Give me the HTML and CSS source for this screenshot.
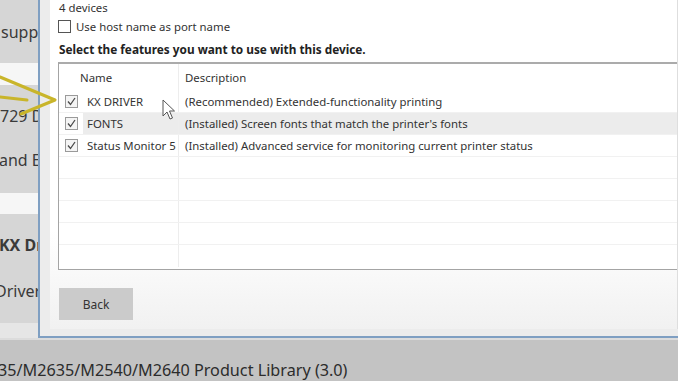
FILE: index.html
```html
<!DOCTYPE html>
<html>
<head>
    <meta charset="utf-8" />
    <title>Product Library - Select features</title>
    <link rel="stylesheet" href="styles.css">
</head>
<body>
    <div class="screen">
        <div class="behind">
            <div class="strip gray tall1"><span class="bgText t1">support</span></div>
            <div class="strip light band"></div>
            <div class="strip gray tall2">
                <span class="bgText t2">729 Driver</span>
                <span class="bgText t3">and Ethernet</span>
            </div>
            <div class="strip light band2"></div>
            <div class="strip gray tall3">
                <span class="bgText bold t4">KX Driver</span>
                <span class="bgText t5">Driver (</span>
            </div>
            <div class="strip pale foot"></div>
        </div>

        <div class="dialog">
            <div class="frame">
                <div class="content">
                    <div class="devices">4 devices</div>
                    <label class="hostRow">
                        <span class="box"></span>
                        <span>Use host name as port name</span>
                    </label>
                    <div class="heading">Select the features you want to use with this device.</div>

                    <div class="list">
                        <div class="row head">
                            <div class="cbCell"></div>
                            <div class="nameCell">Name</div>
                            <div class="descCell">Description</div>
                        </div>
                        <div class="row">
                            <div class="cbCell"><svg class="check" width="13" height="13" viewBox="0 0 13 13"><rect x="0.5" y="0.5" width="12" height="12" fill="#f4f4f4" stroke="#9a9a9a"/><path d="M3 6.5 L5.5 9.5 L10 3" fill="none" stroke="#4a4a4a" stroke-width="1.3"/></svg></div>
                            <div class="nameCell">KX DRIVER</div>
                            <div class="descCell">(Recommended) Extended-functionality printing</div>
                        </div>
                        <div class="row selected">
                            <div class="cbCell"><svg class="check" width="13" height="13" viewBox="0 0 13 13"><rect x="0.5" y="0.5" width="12" height="12" fill="#f4f4f4" stroke="#9a9a9a"/><path d="M3 6.5 L5.5 9.5 L10 3" fill="none" stroke="#4a4a4a" stroke-width="1.3"/></svg></div>
                            <div class="nameCell">FONTS</div>
                            <div class="descCell">(Installed) Screen fonts that match the printer's fonts</div>
                        </div>
                        <div class="row">
                            <div class="cbCell"><svg class="check" width="13" height="13" viewBox="0 0 13 13"><rect x="0.5" y="0.5" width="12" height="12" fill="#f4f4f4" stroke="#9a9a9a"/><path d="M3 6.5 L5.5 9.5 L10 3" fill="none" stroke="#4a4a4a" stroke-width="1.3"/></svg></div>
                            <div class="nameCell">Status Monitor 5</div>
                            <div class="descCell">(Installed) Advanced service for monitoring current printer status</div>
                        </div>
                        <div class="row empty"><div class="cbCell"></div><div class="nameCell"></div><div class="descCell"></div></div>
                        <div class="row empty"><div class="cbCell"></div><div class="nameCell"></div><div class="descCell"></div></div>
                        <div class="row empty"><div class="cbCell"></div><div class="nameCell"></div><div class="descCell"></div></div>
                        <div class="row empty"><div class="cbCell"></div><div class="nameCell"></div><div class="descCell"></div></div>
                        <div class="row empty last"><div class="cbCell"></div><div class="nameCell"></div><div class="descCell"></div></div>
                    </div>

                    <div class="buttons">
                        <button class="backBtn">Back</button>
                    </div>
                </div>
            </div>
        </div>

        <div class="bottomBar">
            <div class="barEdge"></div>
            <div class="barText">35/M2635/M2540/M2640 Product Library (3.0)</div>
        </div>

        <!-- annotation + mouse pointer drawn over the screen -->
        <svg class="marker" width="70" height="130" viewBox="0 0 70 130">
            <path d="M0 77 L55 100 L21 114" fill="none" stroke="#c9b52a" stroke-width="3" stroke-linejoin="round" stroke-linecap="round"/>
            <path d="M0 97 L27 100" fill="none" stroke="#c9b52a" stroke-width="3" stroke-linecap="round"/>
        </svg>
        <svg class="pointer" width="14" height="22" viewBox="0 0 14 22">
            <path d="M1 1 L1 17 L5 13 L8 20 L10.5 19 L7.5 12 L12.5 12 Z" fill="#fff" stroke="#555" stroke-width="1" stroke-linejoin="round"/>
        </svg>
    </div>
</body>
</html>
```

FILE: styles.css
```css
* {
    box-sizing: border-box;
}

body {
    margin: 0;
    width: 678px;
    height: 381px;
    overflow: hidden;
    background-color: #c3c3c3;
    font-family: "Noto Sans", "Open Sans", sans-serif;
    color: #333;
}

.screen {
    position: relative;
    display: grid;
    grid-template-columns: 38px 1fr;
    grid-template-rows: 338px 43px;
    width: 678px;
    height: 381px;
}

/* window sitting behind the dialog */

.behind {
    display: flex;
    flex-direction: column;
    overflow: hidden;
}

.strip {
    display: flex;
    flex-direction: column;
    overflow: hidden;
    white-space: nowrap;
}

.gray {
    background-color: #d6d6d6;
}

.light {
    background-color: #f6f6f6;
}

.pale {
    background-color: #e6e6e6;
}

.tall1 { height: 63px; }
.band { height: 22px; }
.tall2 { height: 108px; }
.band2 { height: 21px; }
.tall3 { height: 109px; }
.foot { flex: 1; }

.bgText {
    font-size: 16px;
    color: #3a3a3a;
    line-height: 22px;
}

.bgText.bold {
    font-weight: bold;
}

.t1 { margin: 21px 0 0 1px; }
.t2 { margin: 20px 0 0 0; }
.t3 { margin: 22px 0 0 -1px; }
.t4 { margin: 20px 0 0 -1px; }
.t5 { margin: 24px 0 0 -5px; }

/* dialog */

.dialog {
    border-left: 2px solid #7f9fc2;
    border-bottom: 2px solid #7f9fc2;
    background-color: #ececec;
}

.frame {
    height: 100%;
    padding: 0 0 7px 10px;
}

.content {
    height: 100%;
    background: linear-gradient(#ffffff 70%, #f1f1f1);
    border-right: 1px solid #dedede;
    padding-left: 8px;
    font-size: 11.4px;
}

.devices {
    line-height: 16px;
    margin-left: 1px;
}

.hostRow {
    display: flex;
    align-items: center;
    gap: 5px;
    margin-top: 3px;
    height: 14px;
}

.box {
    width: 13px;
    height: 13px;
    border: 1px solid #555;
    background-color: #fff;
}

.heading {
    margin: 7px 0 0 1px;
    line-height: 18px;
    font-size: 11.8px;
    font-weight: bold;
    color: #222;
}

.list {
    margin-top: 4px;
    height: 208px;
    border: 1px solid #a4a4a4;
    border-top: 2px solid #ababab;
    border-right: none;
    background-color: #fff;
}

.row {
    display: grid;
    grid-template-columns: 24px 96px 1fr;
    height: 22px;
    align-items: stretch;
    border-bottom: 1px solid #f1f1f1;
}

.row.head {
    height: 27px;
    border-bottom: none;
}

.row.last {
    border-bottom: none;
}

.cbCell {
    display: flex;
    align-items: center;
    padding-left: 6px;
}

.nameCell {
    display: flex;
    align-items: center;
    padding-left: 4px;
    border-right: 1px solid #ededed;
    white-space: nowrap;
}

.head .nameCell {
    padding-left: 0;
    margin-left: -3px;
}

.descCell {
    display: flex;
    align-items: center;
    padding-left: 6px;
    white-space: nowrap;
}

.selected .nameCell,
.selected .descCell {
    background-color: #ececec;
}

.buttons {
    margin-top: 18px;
}

.backBtn {
    width: 74px;
    height: 32px;
    margin-left: 1px;
    border: none;
    background-color: #cbcbcb;
    color: #333;
    font-family: "Noto Sans", "Open Sans", sans-serif;
    font-size: 12px;
}

/* bottom of the window behind */

.bottomBar {
    grid-column: 1 / 3;
    display: flex;
    flex-direction: column;
    overflow: hidden;
    white-space: nowrap;
}

.barEdge {
    height: 7px;
    background-color: #dcdcdc;
}

.barText {
    margin: 19px 0 0 -2px;
    font-size: 16.2px;
    line-height: 22px;
    color: #2c2c2c;
}

/* overlays */

.marker {
    position: absolute;
    left: 0;
    top: 0;
}

.pointer {
    position: absolute;
    left: 162px;
    top: 99px;
}
```
